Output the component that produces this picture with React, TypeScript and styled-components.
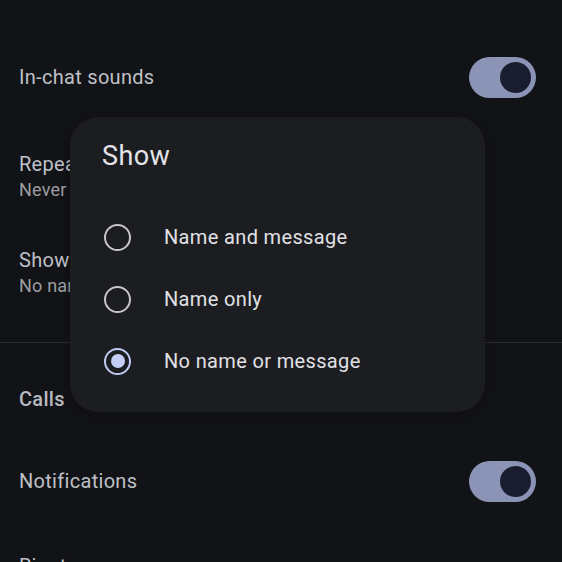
import React from 'react';
import styled, { createGlobalStyle } from 'styled-components';

const GlobalStyle = createGlobalStyle`
    html, body {
        margin: 0;
        padding: 0;
        background: #121316;
        font-family: Roboto, "Noto Sans", sans-serif;
    }
    body {
        width: 562px;
        height: 562px;
        overflow: hidden;
    }
`;

const Screen = styled.div`
    position: relative;
    width: 562px;
    height: 562px;
    overflow: hidden;
    background: #121316;
`;

const SettingsList = styled.div`
    display: flex;
    flex-direction: column;
    margin-top: -40px;
`;

const Row = styled.div<{ $h: number; $end?: boolean }>`
    height: ${(p) => p.$h}px;
    box-sizing: border-box;
    padding: 0 26px 0 19px;
    display: flex;
    align-items: ${(p) => (p.$end ? 'flex-end' : 'center')};
    padding-bottom: ${(p) => (p.$end ? '27px' : '0')};
    justify-content: space-between;
`;

const TextBlock = styled.div`
    display: flex;
    flex-direction: column;
`;

const Title = styled.div`
    font-size: 20px;
    line-height: 25px;
    letter-spacing: 0.3px;
    color: #bfc1c6;
    white-space: nowrap;
`;

const Sub = styled.div<{ $faint?: boolean }>`
    font-size: 18px;
    line-height: 25px;
    letter-spacing: 0.2px;
    color: ${(p) => (p.$faint ? '#5e6064' : '#9c9ea3')};
    white-space: nowrap;
`;

const Divider = styled.div`
    height: 1px;
    background: #2a2b2f;
    margin-top: 25px;
`;

const SectionHeader = styled.div`
    padding: 44px 19px 22px;
    font-size: 20px;
    line-height: 24px;
    font-weight: 500;
    letter-spacing: 0.3px;
    color: #b8bac0;
`;

const Track = styled.div`
    width: 67px;
    height: 41px;
    border-radius: 21px;
    background: #8b94b6;
    display: flex;
    align-items: center;
    justify-content: flex-end;
    padding-right: 5px;
    box-sizing: border-box;
`;

const Thumb = styled.div`
    width: 31px;
    height: 31px;
    border-radius: 50%;
    background: #1a1d2f;
`;

const Dialog = styled.div`
    position: absolute;
    left: 70px;
    top: 117px;
    width: 415px;
    height: 295px;
    box-sizing: border-box;
    border-radius: 28px;
    background: #1c1d21;
    padding: 22px 0 20px;
    box-shadow: 0 2px 10px rgba(0, 0, 0, 0.25);
`;

const DialogTitle = styled.div`
    padding-left: 32px;
    font-size: 27px;
    line-height: 34px;
    letter-spacing: 0.4px;
    color: #e4e4e8;
    margin-bottom: 33px;
`;

const Option = styled.div`
    height: 62px;
    display: flex;
    align-items: center;
    padding-left: 34px;
    gap: 33px;
`;

const Radio = styled.div<{ $on?: boolean }>`
    width: 27px;
    height: 27px;
    box-sizing: border-box;
    border-radius: 50%;
    border: 2.5px solid ${(p) => (p.$on ? '#c0cbf3' : '#c5c6cb')};
    display: flex;
    align-items: center;
    justify-content: center;
    &::after {
        content: '';
        width: 14px;
        height: 14px;
        border-radius: 50%;
        background: ${(p) => (p.$on ? '#c3cdf5' : 'transparent')};
    }
`;

const OptionLabel = styled.div`
    font-size: 20px;
    letter-spacing: 0.35px;
    color: #e1e1e6;
    white-space: nowrap;
`;

const Toggle = () => (
    <Track>
        <Thumb />
    </Track>
);

const options = ['Name and message', 'Name only', 'No name or message'];

const App = () => {
    return (
        <Screen>
            <GlobalStyle />
            <SettingsList>
                <Row $h={69} $end>
                    <Sub $faint>Signal default (Chime notification)</Sub>
                </Row>
                <Row $h={96}>
                    <Title>In-chat sounds</Title>
                    <Toggle />
                </Row>
                <Row $h={104}>
                    <TextBlock>
                        <Title>Repeat alerts</Title>
                        <Sub>Never</Sub>
                    </TextBlock>
                </Row>
                <Row $h={88}>
                    <TextBlock>
                        <Title>Show</Title>
                        <Sub>No name or message</Sub>
                    </TextBlock>
                </Row>
                <Divider />
                <SectionHeader>Calls</SectionHeader>
                <Row $h={96}>
                    <Title>Notifications</Title>
                    <Toggle />
                </Row>
                <Row $h={100}>
                    <TextBlock>
                        <Title>Ringtone</Title>
                        <Sub>Default (Reflection)</Sub>
                    </TextBlock>
                </Row>
            </SettingsList>

            <Dialog>
                <DialogTitle>Show</DialogTitle>
                {options.map((o, i) => (
                    <Option key={o}>
                        <Radio $on={i === 2} />
                        <OptionLabel>{o}</OptionLabel>
                    </Option>
                ))}
            </Dialog>
        </Screen>
    );
};

export default App;
